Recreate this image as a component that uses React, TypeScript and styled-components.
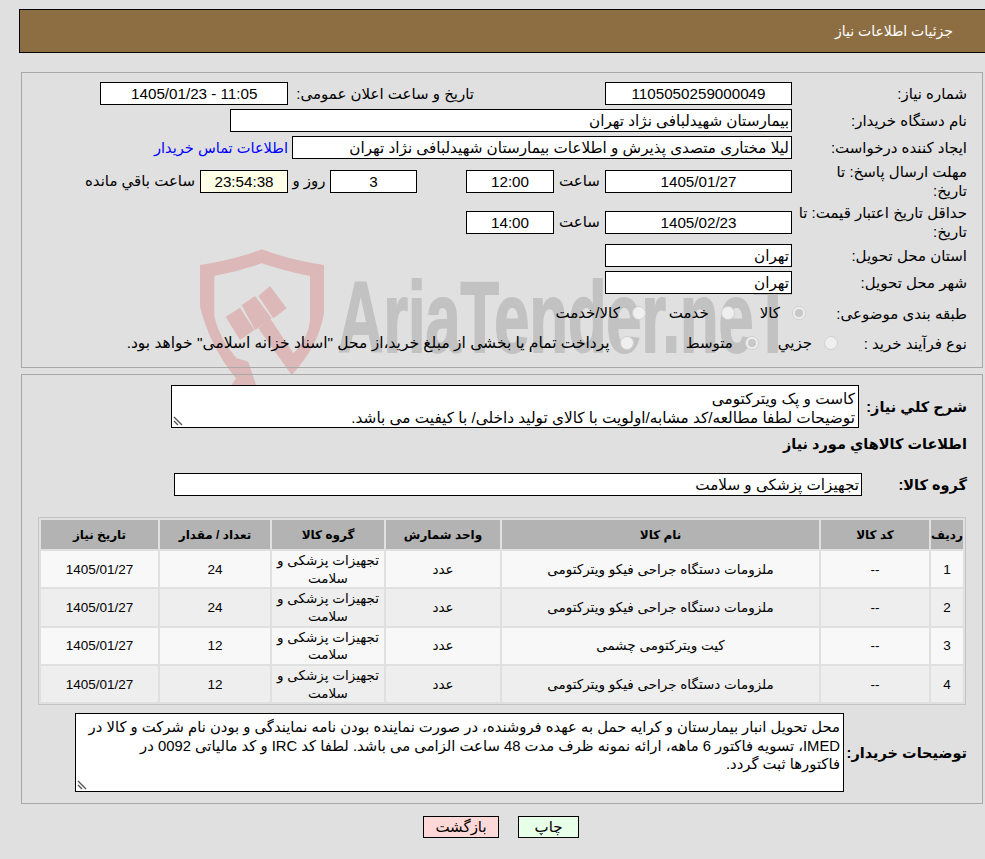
import React from "react";
import styled, { createGlobalStyle } from "styled-components";

const Global = createGlobalStyle`
  html, body { margin: 0; padding: 0; background: #e0e0e0; overflow: hidden; }
  body { width: 985px; height: 859px; font-family: "Liberation Sans", "DejaVu Sans", sans-serif; font-size: 15px; color: #000; }
`;

const Page = styled.div`
  position: relative;
  width: 985px;
  height: 859px;
  padding: 9px 0 0 19px;
  box-sizing: border-box;
  direction: rtl;
  overflow: hidden;
`;

const Header = styled.div`
  height: 44px;
  box-sizing: border-box;
  margin-bottom: 19px;
  background: #8d6e42;
  border: 1px solid #000;
  border-right: none;
  color: #fff;
  font-size: 14px;
  display: flex;
  align-items: center;
  padding-right: 32px;
`;

const Panel = styled.div<{ $h: number }>`
  position: relative;
  margin: 0 2px 6px 2px;
  height: ${(p) => p.$h}px;
  box-sizing: border-box;
  border: 1px solid #a8a8a8;
  padding: 9px 15px 0 0;
`;

const Row = styled.div<{ $h: number; $top?: number }>`
  display: flex;
  align-items: center;
  height: ${(p) => p.$h}px;
  margin-top: ${(p) => p.$top ?? 0}px;
`;

const Label = styled.div<{ $w?: number; $pad?: number }>`
  width: ${(p) => p.$w ?? 175}px;
  flex: none;
  line-height: 19px;
  padding-left: ${(p) => p.$pad ?? 8}px;
  box-sizing: border-box;
`;

const Field = styled.div<{ $w: number; $align?: string; $bg?: string; $mr?: number; $ltr?: boolean }>`
  width: ${(p) => p.$w}px;
  height: 23px;
  flex: none;
  box-sizing: border-box;
  background: ${(p) => p.$bg ?? "#fff"};
  border: 1px solid #000;
  margin-right: ${(p) => p.$mr ?? 0}px;
  direction: ${(p) => (p.$ltr ? "ltr" : "rtl")};
  display: flex;
  align-items: center;
  justify-content: ${(p) => p.$align ?? "center"};
  padding: 0 2px;
  font-size: 15.2px;
  white-space: nowrap;
`;

const Text = styled.span<{ $mr?: number; $w?: number; $size?: number }>`
  margin-right: ${(p) => p.$mr ?? 0}px;
  ${(p) => (p.$w ? `width: ${p.$w}px; flex: none; text-align: center;` : "")}
  ${(p) => (p.$size ? `font-size: ${p.$size}px;` : "")}
  white-space: nowrap;
`;

const Link = styled.a`
  color: #0000ff;
  margin-right: 4px;
  font-size: 14.6px;
  white-space: nowrap;
`;

const Radio = styled.span<{ $mr?: number; $on?: boolean }>`
  position: relative;
  width: 14px;
  height: 14px;
  flex: none;
  border-radius: 50%;
  background: ${(p) => (p.$on ? "radial-gradient(circle, #c8c8c8 0 4px, #efefef 4.5px)" : "#efefef")};
  border: 1px solid #d0d0d0;
  box-sizing: border-box;
  margin-right: ${(p) => p.$mr ?? 0}px;
  margin-left: 12px;
`;

const Boxed = styled.div<{ $w: number; $h: number; $size: number }>`
  position: relative;
  width: ${(p) => p.$w}px;
  height: ${(p) => p.$h}px;
  flex: none;
  box-sizing: border-box;
  background: #fff;
  border: 1px solid #000;
  padding: 4px 3px 0;
  font-size: ${(p) => p.$size}px;
  line-height: 18.5px;
`;

const Grip = styled.svg`
  position: absolute;
  left: 1px;
  bottom: 1px;
`;

const Bold = styled.div<{ $w?: number }>`
  font-weight: bold;
  font-size: 14.5px;
  width: ${(p) => (p.$w ? `${p.$w}px` : "auto")};
  flex: none;
  white-space: nowrap;
`;

const TableWrap = styled.div`
  margin: 21px 1px 0 16px;
  border: 1px solid #c4c4c4;
`;

const Table = styled.table`
  width: 100%;
  border-collapse: separate;
  border-spacing: 2px;
  table-layout: fixed;
  font-size: 13.5px;
`;

const Th = styled.th<{ $w: number }>`
  width: ${(p) => p.$w}px;
  height: 29px;
  padding: 0;
  background: #b3b3b3;
  font-size: 12px;
  font-weight: bold;
`;

const Tr = styled.tr<{ $odd: boolean }>`
  background: ${(p) => (p.$odd ? "#f8f8f8" : "#eeeeee")};
`;

const Td = styled.td`
  height: 36.3px;
  padding: 1px 0 0;
  box-sizing: border-box;
  text-align: center;
  line-height: 17.5px;
`;

const Buttons = styled.div`
  display: flex;
  justify-content: center;
  gap: 19px;
  padding: 6px 2px 0 0;
`;

const Button = styled.div<{ $bg: string; $w: number }>`
  width: ${(p) => p.$w}px;
  height: 22px;
  box-sizing: border-box;
  background: ${(p) => p.$bg};
  border: 1px solid #000;
  display: flex;
  align-items: center;
  justify-content: center;
`;

const Shield = styled.svg`
  position: absolute;
  left: 190px;
  top: 240px;
`;

const WatermarkText = styled.div`
  position: absolute;
  left: 338px;
  top: 262px;
  direction: ltr;
  font-family: "Liberation Sans", sans-serif;
  font-weight: bold;
  font-size: 100px;
  line-height: 110px;
  color: #c2c2c2;
  -webkit-text-stroke: 2px #c2c2c2;
  white-space: nowrap;
  transform: scaleX(0.63);
  transform-origin: left top;
`;

const Content = styled.div`
  position: relative;
`;

const rows = [
  ["1", "ملزومات دستگاه جراحی فیکو ویترکتومی", "24"],
  ["2", "ملزومات دستگاه جراحی فیکو ویترکتومی", "24"],
  ["3", "کیت ویترکتومی چشمی", "12"],
  ["4", "ملزومات دستگاه جراحی فیکو ویترکتومی", "12"],
];

function GripIcon() {
  return (
    <Grip width="11" height="11" viewBox="0 0 11 11">
      <path d="M1 2L9 10M1 6L5 10" stroke="#555" strokeWidth="1.4" fill="none" />
    </Grip>
  );
}

export default function App() {
  return (
    <Page>
      <Global />
      <Shield width="150" height="150" viewBox="0 0 450 450">
        <path
          d="M30 75Q130 60 215 28Q300 60 402 75V220Q385 320 305 405L205 265L240 235L310 340Q360 290 360 230V108Q290 95 215 70Q145 95 73 108V230Q90 300 140 355L175 365L200 440L125 435L138 415Q60 320 30 200Z"
          fill="#dcb8b8"
        />
        <path d="M205 168L240 138L290 205L250 235ZM155 195L195 168L245 235L195 270ZM107 230L150 203L193 270L150 300Z" fill="#dcb8b8" />
      </Shield>
      <WatermarkText>AriaTender.neT</WatermarkText>
      <Content>
        <Header>جزئیات اطلاعات نیاز</Header>
        <Panel $h={296}>
          <Row $h={23}>
            <Label>شماره نیاز:</Label>
            <Field $w={187}>1105050259000049</Field>
            <Text $mr={131}>تاریخ و ساعت اعلان عمومی:</Text>
            <Field $w={188} $mr={8} $ltr>1405/01/23 - 11:05</Field>
          </Row>
          <Row $h={23} $top={4}>
            <Label>نام دستگاه خریدار:</Label>
            <Field $w={562} $align="flex-start">بیمارستان شهیدلبافی نژاد تهران</Field>
          </Row>
          <Row $h={23} $top={4}>
            <Label>ایجاد کننده درخواست:</Label>
            <Field $w={500} $align="flex-start">لیلا مختاری متصدی پذیرش و اطلاعات بیمارستان شهیدلبافی نژاد تهران</Field>
            <Link>اطلاعات تماس خریدار</Link>
          </Row>
          <Row $h={38} $top={3}>
            <Label>مهلت ارسال پاسخ: تا تاریخ:</Label>
            <Field $w={187}>1405/01/27</Field>
            <Text $w={51}>ساعت</Text>
            <Field $w={88}>12:00</Field>
            <Field $w={87} $mr={49}>3</Field>
            <Text $w={42}>روز و</Text>
            <Field $w={88} $bg="#ffffe8">23:54:38</Field>
            <Text $mr={5}>ساعت باقي مانده</Text>
          </Row>
          <Row $h={38} $top={3}>
            <Label $pad={3}>حداقل تاریخ اعتبار قیمت: تا تاریخ:</Label>
            <Field $w={187}>1405/02/23</Field>
            <Text $w={51}>ساعت</Text>
            <Field $w={88}>14:00</Field>
          </Row>
          <Row $h={23} $top={3}>
            <Label>استان محل تحویل:</Label>
            <Field $w={187} $align="flex-start">تهران</Field>
          </Row>
          <Row $h={23} $top={4}>
            <Label>شهر محل تحویل:</Label>
            <Field $w={187} $align="flex-start">تهران</Field>
          </Row>
          <Row $h={22} $top={8}>
            <Label $w={161}>طبقه بندی موضوعی:</Label>
            <Radio $on />
            <Text>کالا</Text>
            <Radio $mr={25} />
            <Text>خدمت</Text>
            <Radio $mr={23} />
            <Text>کالا/خدمت</Text>
          </Row>
          <Row $h={22} $top={8}>
            <Label $w={129}>نوع فرآیند خرید :</Label>
            <Radio />
            <Text>جزیي</Text>
            <Radio $mr={19} $on />
            <Text>متوسط</Text>
            <Radio $mr={52} />
            <Text $mr={-2} $size={15.5}>پرداخت تمام یا بخشی از مبلغ خرید،از محل "اسناد خزانه اسلامی" خواهد بود.</Text>
          </Row>
        </Panel>
        <Panel $h={430}>
          <Row $h={43} $top={1}>
            <Bold $w={108}>شرح كلي نیاز:</Bold>
            <Boxed $w={688} $h={43} $size={15.3}>
              کاست و پک ویترکتومی
              <br />
              توضیحات لطفا مطالعه/کد مشابه/اولویت با کالای تولید داخلی/ با کیفیت می باشد.
              <GripIcon />
            </Boxed>
          </Row>
          <Row $h={22} $top={5}>
            <Bold>اطلاعات كالاهاي مورد نیاز</Bold>
          </Row>
          <Row $h={23} $top={18}>
            <Bold $w={105}>گروه کالا:</Bold>
            <Field $w={688} $align="flex-start">تجهیزات پزشکی و سلامت</Field>
          </Row>
          <TableWrap>
            <Table>
              <thead>
                <tr>
                  <Th $w={32}>رديف</Th>
                  <Th $w={108}>کد کالا</Th>
                  <Th $w={317}>نام کالا</Th>
                  <Th $w={114}>واحد شمارش</Th>
                  <Th $w={112}>گروه کالا</Th>
                  <Th $w={110}>تعداد / مقدار</Th>
                  <Th $w={117}>تاریخ نیاز</Th>
                </tr>
              </thead>
              <tbody>
                {rows.map((r, i) => (
                  <Tr key={r[0]} $odd={i % 2 === 0}>
                    <Td>{r[0]}</Td>
                    <Td>--</Td>
                    <Td>{r[1]}</Td>
                    <Td>عدد</Td>
                    <Td>تجهیزات پزشکی و سلامت</Td>
                    <Td>{r[2]}</Td>
                    <Td>1405/01/27</Td>
                  </Tr>
                ))}
              </tbody>
            </Table>
          </TableWrap>
          <Row $h={79} $top={8}>
            <Bold $w={123}>توضیحات خریدار:</Bold>
            <Boxed $w={769} $h={79} $size={14.8}>
              محل تحویل انبار بیمارستان و کرایه حمل به عهده فروشنده، در صورت نماینده بودن نامه نمایندگی و بودن نام شرکت و کالا در IMED، تسویه فاکتور 6 ماهه، ارائه نمونه ظرف مدت 48 ساعت الزامی می باشد. لطفا کد IRC و کد مالیاتی 0092 در
              <br />
              فاکتورها ثبت گردد.
              <GripIcon />
            </Boxed>
          </Row>
        </Panel>
        <Buttons>
          <Button $bg="#e8ffe8" $w={61}>چاپ</Button>
          <Button $bg="#ffd8d8" $w={76}>بازگشت</Button>
        </Buttons>
      </Content>
    </Page>
  );
}
